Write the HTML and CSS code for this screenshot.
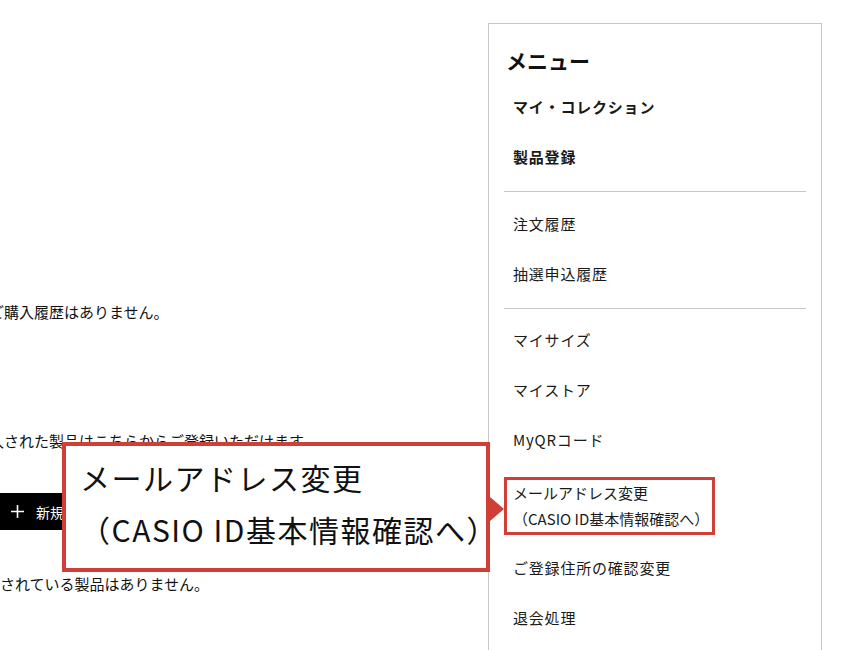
FILE: index.html
```html
<!DOCTYPE html>
<html lang="ja">
<head>
    <meta charset="UTF-8">
    <meta name="viewport" content="width=device-width, initial-scale=1.0">
    <title>マイページ</title>
    <link rel="stylesheet" href="styles.css">
</head>
<body>
    <div class="page">
        <main class="main">
            <p class="history-empty">まだご購入履歴はありません。</p>
            <p class="register-lead">ご購入された製品はこちらからご登録いただけます。</p>
            <button class="register-btn">
                <svg class="plus" width="13" height="13" viewBox="0 0 13 13"><path d="M6.5 0v13M0 6.5h13" stroke="#fff" stroke-width="1.6"/></svg>
                新規製品登録
            </button>
            <p class="register-empty">登録されている製品はありません。</p>
        </main>

        <aside class="menu">
            <div class="menu-title">メニュー</div>
            <ul class="menu-group">
                <li class="menu-item strong">マイ・コレクション</li>
                <li class="menu-item strong">製品登録</li>
            </ul>
            <ul class="menu-group">
                <li class="menu-item">注文履歴</li>
                <li class="menu-item">抽選申込履歴</li>
            </ul>
            <ul class="menu-group last">
                <li class="menu-item">マイサイズ</li>
                <li class="menu-item">マイストア</li>
                <li class="menu-item">MyQRコード</li>
                <li class="menu-item mail">
                    <span class="mark">メールアドレス変更<br>（CASIO ID基本情報確認へ）</span>
                </li>
                <li class="menu-item">ご登録住所の確認変更</li>
                <li class="menu-item">退会処理</li>
            </ul>
        </aside>

        <!-- 吹き出し -->
        <div class="callout">
            メールアドレス変更<br>
            （CASIO ID基本情報確認へ）
        </div>
    </div>
</body>
</html>
```

FILE: styles.css
```css
body {
    font-family: "Noto Sans CJK JP", "Noto Sans", sans-serif;
    margin: 0;
    padding: 0;
    background-color: #fff;
    color: #111;
    overflow: hidden;
}
.page {
    position: relative;
    display: flex;
    padding-right: 23px;
    height: 650px;
    overflow: hidden;
}
.main {
    flex: 1;
    margin-left: -41px;
    font-size: 15px;
}
.main p {
    margin: 0;
    line-height: 24px;
    white-space: nowrap;
}
.history-empty {
    padding-top: 300px;
}
.register-lead {
    margin-top: 105px !important;
}
.register-btn {
    display: flex;
    align-items: center;
    gap: 12px;
    margin-top: 40px;
    height: 37px;
    width: 230px;
    padding: 0 0 0 52px;
    border: none;
    background-color: #000;
    color: #fff;
    font-family: inherit;
    font-size: 14px;
    cursor: pointer;
}
.register-empty {
    margin-top: 42px !important;
    padding-left: 11px;
}
.menu {
    width: 302px;
    margin-top: 23px;
    padding: 21px 15px 40px;
    border: 1px solid #c6c6c6;
    border-bottom: none;
    box-sizing: content-box;
}
.menu-title {
    font-size: 21px;
    font-weight: bold;
    line-height: 30px;
    padding-left: 2px;
    margin-bottom: 7px;
}
.menu-group {
    list-style: none;
    margin: 0;
    padding: 0 0 9px;
    border-bottom: 1px solid #c6c6c6;
}
.menu-group + .menu-group {
    padding-top: 7px;
}
.menu-group.last {
    border-bottom: none;
    padding-top: 6px;
}
.menu-item {
    padding: 14px 9px;
    font-size: 15px;
    line-height: 22px;
    letter-spacing: 0.8px;
    color: #1a1a1a;
}
.menu-item.strong {
    font-weight: bold;
}
.menu-item.mail {
    padding: 12px 0 8px;
}
.mark {
    display: block;
    width: fit-content;
    padding: 0 3px 0 6px;
    line-height: 26px;
    border: 3px solid #cf3f36;
    letter-spacing: 0;
}
.callout {
    position: absolute;
    left: 62px;
    top: 442px;
    width: 428px;
    height: 130px;
    box-sizing: border-box;
    padding: 5px 0 0 14px;
    border: 4px solid #cf3f36;
    background-color: #fff;
    font-size: 30px;
    line-height: 52px;
    letter-spacing: 1.5px;
    color: #111;
}
.callout::after {
    content: "";
    position: absolute;
    right: -18px;
    top: 51px;
    border-top: 12px solid transparent;
    border-bottom: 12px solid transparent;
    border-left: 14px solid #cf3f36;
}
```
